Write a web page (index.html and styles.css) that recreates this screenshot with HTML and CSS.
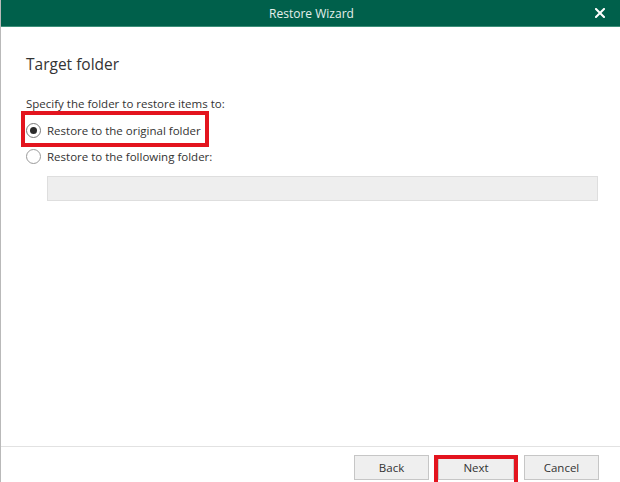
FILE: index.html
```html
<!DOCTYPE html>
<html lang="en">
<head>
    <meta charset="UTF-8">
    <meta name="viewport" content="width=device-width, initial-scale=1.0">
    <title>Restore Wizard</title>
    <link rel="stylesheet" href="styles.css">
</head>
<body>

<div id="wizard">
    <div id="titlebar">
        <span class="title">Restore Wizard</span>
        <button id="close" aria-label="Close">
            <svg width="10" height="10" viewBox="0 0 10 10">
                <path d="M1 1 L9 9 M9 1 L1 9" stroke="#fff" stroke-width="2" stroke-linecap="square"/>
            </svg>
        </button>
    </div>

    <div id="page">
        <h1>Target folder</h1>
        <p class="prompt">Specify the folder to restore items to:</p>

        <label class="option marked">
            <input type="radio" name="target" checked/>
            <span class="dot"></span>
            Restore to the original folder
        </label>
        <label class="option">
            <input type="radio" name="target"/>
            <span class="dot"></span>
            Restore to the following folder:
        </label>
        <div class="path"></div>
    </div>

    <div id="actions">
        <button>Back</button>
        <button class="marked">Next</button>
        <button>Cancel</button>
    </div>
</div>

</body>
</html>
```

FILE: styles.css
```css
* {
    margin: 0;
    padding: 0;

    font-family: 'Open Sans', 'Noto Sans', sans-serif;
    box-sizing: border-box;
    outline: none;
}

body {
    background: #fff;
    width: 620px;
    height: 482px;
    overflow: hidden;
}

#wizard {
    height: 482px;
    display: flex;
    flex-direction: column;
    border-left: 1px solid #b9b9b9;
    background: #fff;
}

#titlebar {
    height: 27px;
    flex: none;
    background: #00604b;
    border-bottom: 1px solid #3d8f79;
    display: flex;
    align-items: center;
    justify-content: center;
    position: relative;
}

#titlebar .title {
    color: #e4efec;
    font-size: 12px;
    margin-left: 2px;
}

#close {
    position: absolute;
    right: 14px;
    top: 7px;
    width: 12px;
    height: 12px;
    border: none;
    background: none;
    display: flex;
    align-items: center;
    justify-content: center;
}

#page {
    flex: 1;
    padding: 26px 22px 0 25px;
    color: #333;
}

#page h1 {
    font-weight: normal;
    font-size: 15.5px;
    line-height: 22px;
    color: #333;
}

.prompt {
    margin-top: 21px;
    font-size: 11.5px;
    line-height: 16px;
}

.option {
    display: flex;
    align-items: center;
    width: max-content;
    height: 26px;
    padding-right: 6px;
    font-size: 11.5px;
    position: relative;
}

.option:first-of-type {
    margin-top: 5px;
}

.option input {
    display: none;
}

.option .dot {
    width: 15px;
    height: 15px;
    margin: 0 6px 0 0;
    border: 1px solid #9a9a9a;
    border-radius: 50%;
    background: #fff;
    display: flex;
    align-items: center;
    justify-content: center;
}

.option input:checked + .dot {
    border-color: #7a7a7a;
}

.option input:checked + .dot:before {
    content: '';
    width: 7px;
    height: 7px;
    border-radius: 50%;
    background: #2b2b2b;
}

.path {
    margin: 7px 0 0 21px;
    height: 25px;
    background: #eeeeee;
    border: 1px solid #dedede;
}

#actions {
    flex: none;
    height: 36px;
    border-top: 1px solid #e2e2e2;
    padding: 8px 21px 0 0;
    display: flex;
    justify-content: flex-end;
    gap: 9px;
}

#actions button {
    width: 75px;
    height: 25px;
    background: #efefef;
    border: 1px solid #c6c6c6;
    color: #333;
    font-size: 11.5px;
    position: relative;
}

#actions button.marked {
    width: 76px;
    margin: 0 1px 0 0;
}

/* red annotation frames */
.marked:after {
    content: '';
    position: absolute;
    border: 4px solid #e3141e;
    pointer-events: none;
}

.option.marked:after {
    top: -6px;
    bottom: -4px;
    left: -5px;
    right: -2px;
}

#actions .marked:after {
    top: -1px;
    bottom: -8px;
    left: -5px;
    right: -5px;
}
```
